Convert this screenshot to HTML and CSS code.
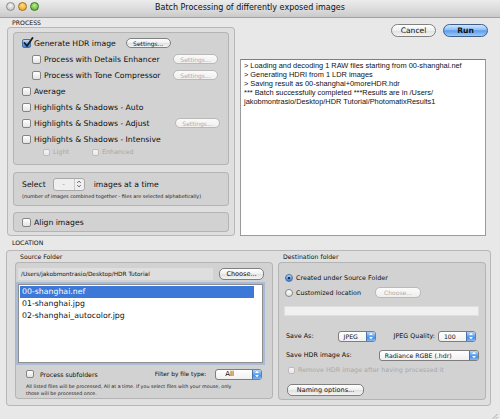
FILE: index.html
```html
<!DOCTYPE html>
<html>
<head>
<meta charset="utf-8">
<link rel="stylesheet" href="styles.css">
</head>
<body>
<div class="window">
  <div class="titlebar">
    <div class="lights">
      <span class="light close"></span>
      <span class="light min"></span>
      <span class="light zoom"></span>
    </div>
    <div class="title">Batch Processing of differently exposed images</div>
  </div>

  <div class="top">
    <div class="process-col">
      <div class="section-label">PROCESS</div>
      <div class="group outer process">
        <div class="group inner opts">
          <div class="row">
            <span class="cb checked"><svg viewBox="0 0 12 12" width="12" height="12"><path d="M2.5 6 L5 9 L10.5 1" fill="none" stroke="#1a1a1a" stroke-width="1.8" stroke-linecap="round" stroke-linejoin="round"/></svg></span>
            <span class="lbl">Generate HDR image</span>
            <span class="btn sm gen">Settings...</span>
          </div>
          <div class="row sub">
            <span class="cb"></span>
            <span class="lbl">Process with Details Enhancer</span>
            <span class="btn sm disabled push">Settings...</span>
          </div>
          <div class="row sub">
            <span class="cb"></span>
            <span class="lbl">Process with Tone Compressor</span>
            <span class="btn sm disabled push">Settings...</span>
          </div>
          <div class="row">
            <span class="cb"></span>
            <span class="lbl">Average</span>
          </div>
          <div class="row">
            <span class="cb"></span>
            <span class="lbl">Highlights &amp; Shadows - Auto</span>
          </div>
          <div class="row">
            <span class="cb"></span>
            <span class="lbl">Highlights &amp; Shadows - Adjust</span>
            <span class="btn sm disabled push adj">Settings...</span>
          </div>
          <div class="row">
            <span class="cb"></span>
            <span class="lbl">Highlights &amp; Shadows - Intensive</span>
          </div>
          <div class="row mini">
            <span class="cb tiny disabled"></span>
            <span class="lbl small dis light-lbl">Light</span>
            <span class="cb tiny disabled"></span>
            <span class="lbl small dis">Enhanced</span>
          </div>
        </div>
        <div class="group inner select">
          <div class="row sel">
            <span class="lbl">Select</span>
            <span class="stepper"><span class="stepfield">-</span><span class="steparrows"><svg viewBox="0 0 6 10" width="6" height="10"><path d="M1.2 4 L3 2 L4.8 4 M1.2 6 L3 8 L4.8 6" fill="none" stroke="#666" stroke-width="0.9"/></svg></span></span>
            <span class="lbl">images at a time</span>
          </div>
          <div class="tiny-note">(number of images combined together - files are selected alphabetically)</div>
        </div>
        <div class="group inner align">
          <div class="row">
            <span class="cb"></span>
            <span class="lbl">Align images</span>
          </div>
        </div>
      </div>
    </div>

    <div class="right-col">
      <div class="actions">
        <span class="btn big">Cancel</span>
        <span class="btn big default">Run</span>
      </div>
      <div class="log">
        <div>&gt; Loading and decoding 1 RAW files starting from 00-shanghai.nef</div>
        <div>&gt; Generating HDRI from 1 LDR images</div>
        <div>&gt; Saving result as 00-shanghai+0moreHDR.hdr</div>
        <div>*** Batch successfully completed ***Results are in /Users/</div>
        <div>jakobmontrasio/Desktop/HDR Tutorial/PhotomatixResults1</div>
      </div>
    </div>
  </div>

  <div class="section-label loc">LOCATION</div>
  <div class="group outer location">
    <div class="src-col">
      <div class="sublabel">Source Folder</div>
      <div class="group inner source">
        <div class="path-row">
          <span class="pathfield">/Users/jakobmontrasio/Desktop/HDR Tutorial</span>
          <span class="btn sm choose">Choose...</span>
        </div>
        <div class="list">
          <div class="item selected">00-shanghai.nef</div>
          <div class="item">01-shanghai.jpg</div>
          <div class="item">02-shanghai_autocolor.jpg</div>
        </div>
        <div class="filter-row">
          <span class="cb"></span>
          <span class="lbl small sub-lbl">Process subfolders</span>
          <span class="lbl small filter">Filter by file type:</span>
          <span class="popup all"><span class="ptext">All</span><span class="parrows"><svg viewBox="0 0 8 10" width="8" height="10"><path d="M2 4 L4 1.8 L6 4 Z M2 6 L4 8.2 L6 6 Z" fill="#fff"/></svg></span></span>
        </div>
        <div class="note">All listed files will be processed, All at a time. If you select files with your mouse, only<br>those will be processed once.</div>
      </div>
    </div>
    <div class="dst-col">
      <div class="sublabel">Destination folder</div>
      <div class="group inner dest">
        <div class="drow r1">
          <span class="radio on"></span>
          <span class="lbl small">Created under Source Folder</span>
        </div>
        <div class="drow r2">
          <span class="radio"></span>
          <span class="lbl small">Customized location</span>
          <span class="btn sm disabled choose2">Choose...</span>
        </div>
        <div class="destfield"></div>
        <div class="drow saveas">
          <span class="lbl small">Save As:</span>
          <span class="popup jpeg"><span class="ptext">JPEG</span><span class="parrows"><svg viewBox="0 0 8 10" width="8" height="10"><path d="M2 4 L4 1.8 L6 4 Z M2 6 L4 8.2 L6 6 Z" fill="#fff"/></svg></span></span>
          <span class="lbl small quality">JPEG Quality:</span>
          <span class="popup q"><span class="ptext">100</span><span class="parrows"><svg viewBox="0 0 8 10" width="8" height="10"><path d="M2 4 L4 1.8 L6 4 Z M2 6 L4 8.2 L6 6 Z" fill="#fff"/></svg></span></span>
        </div>
        <div class="drow savehdr">
          <span class="lbl small">Save HDR image As:</span>
          <span class="popup hdr"><span class="ptext">Radiance RGBE (.hdr)</span><span class="parrows"><svg viewBox="0 0 8 10" width="8" height="10"><path d="M2 4 L4 1.8 L6 4 Z M2 6 L4 8.2 L6 6 Z" fill="#fff"/></svg></span></span>
        </div>
        <div class="drow remove">
          <span class="cb disabled"></span>
          <span class="lbl small dis">Remove HDR image after having processed it</span>
        </div>
        <div class="drow naming">
          <span class="btn sm name">Naming options...</span>
        </div>
      </div>
    </div>
  </div>
  <div class="grip"><svg viewBox="0 0 10 10" width="10" height="10"><path d="M2 9.5 L9.5 2 M5 9.5 L9.5 5 M8 9.5 L9.5 8" stroke="#999" stroke-width="0.8"/></svg></div>
</div>
</body>
</html>
```

FILE: styles.css
```css
* { box-sizing: border-box; }
html, body { margin: 0; padding: 0; }
body {
  width: 500px;
  height: 419px;
  overflow: hidden;
  background: #e8e8e8;
  font-family: "DejaVu Sans", "Noto Sans", sans-serif;
  color: #111;
}
.window {
  position: relative;
  width: 500px;
  height: 419px;
  background: #e8e8e8;
}
.titlebar {
  position: relative;
  height: 18px;
  background: linear-gradient(#ececec, #d6d6d6 70%, #c9c9c9);
  border-bottom: 1px solid #a2a2a2;
  display: flex;
  align-items: center;
  justify-content: center;
}
.lights {
  position: absolute;
  left: 6px;
  top: 2px;
  display: flex;
  gap: 3px;
}
.light {
  width: 9px;
  height: 9px;
  border-radius: 50%;
  border: 1px solid #777;
}
.light.close { background: radial-gradient(circle at 50% 35%, #f4f4f4, #bcbcbc); border-color: #8a8a8a; }
.light.min { background: radial-gradient(circle at 50% 35%, #ffe27a, #e89b1c); border-color: #a86d10; }
.light.zoom { background: radial-gradient(circle at 50% 35%, #b9ef8a, #4ca62a); border-color: #3b7a1e; }
.title {
  font-size: 8px;
  color: #111;
  margin-top: -3px;
}

.top {
  display: flex;
  height: 218px;
}
.process-col {
  margin-left: 7px;
  width: 228px;
}
.section-label {
  font-size: 6.2px;
  line-height: 9px;
  height: 9px;
  padding-left: 5px;
  color: #111;
}
.group {
  border: 1px solid rgba(0,0,0,0.18);
  border-radius: 4px;
  background: rgba(0,0,0,0.035);
}
.group.inner {
  background: rgba(0,0,0,0.055);
  border-color: rgba(0,0,0,0.15);
}
.process {
  height: 209px;
  padding: 4px 5px 0 5px;
}
.opts {
  height: 133px;
  padding: 2px 8px 0 8px;
}
.row {
  display: flex;
  align-items: center;
  height: 16px;
}
.row.sub { padding-left: 10px; }
.row.mini { height: 10px; padding-left: 21px; }
.lbl {
  font-size: 7.7px;
  white-space: nowrap;
  color: #0e0e0e;
}
.lbl.small { font-size: 6.4px; }
.lbl.dis { color: #a8a8a8; }
.cb + .lbl { margin-left: 3px; }
.light-lbl { width: 39px; }
.cb {
  position: relative;
  flex: none;
  width: 9px;
  height: 9px;
  border: 1px solid #858585;
  border-radius: 2px;
  background: linear-gradient(#ffffff, #e3e3e3);
}
.cb.checked {
  background: linear-gradient(#c6defa, #6aa5ee 50%, #3c86e0);
  border-color: #4b6f9c;
}
.cb.checked svg {
  position: absolute;
  left: -1px;
  top: -3px;
}
.cb.tiny { width: 7px; height: 7px; }
.cb.disabled { border-color: #bdbdbd; background: linear-gradient(#f6f6f6, #e8e8e8); }

.btn {
  display: inline-flex;
  align-items: center;
  justify-content: center;
  flex: none;
  white-space: nowrap;
  border: 1px solid #808080;
  border-radius: 7px;
  background: linear-gradient(#ffffff, #efefef 50%, #e0e0e0 51%, #f4f4f4);
  color: #111;
}
.btn.sm {
  height: 10px;
  width: 45px;
  font-size: 6px;
  border-radius: 5px;
}
.btn.disabled { color: #ababab; border-color: #b9b9b9; background: linear-gradient(#fbfbfb, #efefef); }
.btn.gen { margin-left: 10px; }
.push { margin-left: auto; margin-right: 2px; }
.push.adj { margin-right: 0; }

.select {
  margin-top: 7px;
  height: 34px;
  padding: 4px 8px 0 8px;
}
.row.sel { height: 14px; }
.stepper {
  display: flex;
  align-items: center;
  margin-left: 7px;
  margin-right: 9px;
  width: 32px;
  height: 13px;
  border: 1px solid #a9a9a9;
  border-radius: 3px;
  background: #efefef;
}
.stepfield {
  flex: 1;
  font-size: 6.5px;
  text-align: center;
  color: #888;
  height: 100%;
  line-height: 11px;
  border-right: 1px solid #c8c8c8;
}
.steparrows {
  width: 9px;
  display: flex;
  justify-content: center;
}
.tiny-note {
  font-size: 4.9px;
  line-height: 7px;
  margin-top: 2px;
  white-space: nowrap;
  color: #222;
}
.align {
  margin-top: 6px;
  height: 20px;
  padding: 0 8px;
}
.align .row { height: 18px; }

.right-col {
  margin-left: 5px;
  width: 248px;
}
.actions {
  margin-top: 6px;
  display: flex;
  justify-content: flex-end;
  gap: 7px;
  height: 13px;
}
.btn.big {
  width: 45px;
  height: 13px;
  font-size: 7.6px;
  border-radius: 7px;
}
.btn.default {
  border-color: #3d5f8f;
  background: linear-gradient(#d3e6fc, #8fbef4 45%, #5b9ded 52%, #9ccbf8);
  font-weight: bold;
}
.log {
  margin-top: 22px;
  width: 246px;
  height: 177px;
  background: #fff;
  border: 1px solid #9b9b9b;
  border-top-color: #7e7e7e;
  padding: 1px 3px;
  font-family: "Liberation Sans", Arial, sans-serif;
  font-size: 7.4px;
  line-height: 9px;
  color: #111;
  white-space: nowrap;
}

.section-label.loc {
  margin-top: 2px;
  padding-left: 12px;
  height: 9px;
}
.location {
  margin-top: 3px;
  margin-left: 6px;
  width: 485px;
  height: 156px;
  display: flex;
  gap: 5px;
  padding: 0 4px 0 8px;
}
.sublabel {
  font-size: 6.2px;
  line-height: 11px;
  height: 11px;
  padding-left: 5px;
  color: #111;
}
.src-col { width: 258px; }
.dst-col { width: 208px; }
.source {
  height: 137px;
  padding: 5px 0 0 2px;
}
.path-row {
  display: flex;
  align-items: center;
  height: 12px;
}
.pathfield {
  width: 195px;
  height: 12px;
  background: #dedede;
  font-size: 5.8px;
  line-height: 12px;
  padding-left: 3px;
  white-space: nowrap;
  color: #111;
}
.btn.choose { margin-left: 6px; height: 12px; width: 45px; font-size: 6.5px; }
.list {
  margin-top: 4px;
  width: 245px;
  height: 79px;
  background: #fff;
  border: 1px solid #8e8e8e;
  box-shadow: 0 0 0 2px rgba(120,160,220,0.45);
  padding: 1px 0 0 1px;
}
.item {
  width: 234px;
  height: 12px;
  line-height: 12px;
  font-size: 7.8px;
  padding-left: 2px;
  color: #111;
}
.item.selected { background: #3b78d8; color: #fff; }
.filter-row {
  display: flex;
  align-items: center;
  margin-top: 5px;
  height: 12px;
  padding-left: 8px;
}
.filter-row .cb { width: 8px; height: 8px; }
.filter-row .lbl.sub-lbl { margin-left: 6px; font-size: 6.2px; }
.filter-row .lbl.filter { margin-left: 57px; font-size: 5.9px; }
.popup {
  display: inline-flex;
  align-items: stretch;
  flex: none;
  height: 11px;
  border: 1px solid #7d7d7d;
  border-radius: 3px;
  background: linear-gradient(#ffffff, #f0f0f0);
  overflow: hidden;
}
.ptext {
  flex: 1;
  font-size: 6.2px;
  line-height: 9px;
  padding-left: 5px;
  white-space: nowrap;
}
.parrows {
  width: 9px;
  display: flex;
  align-items: center;
  justify-content: center;
  background: linear-gradient(#b6d5fa, #5e9ff0 50%, #3b85e6 52%, #7fb8f6);
  border-left: 1px solid #4a73a8;
}
.popup.all { width: 47px; margin-left: 9px; }
.popup.all .ptext { font-size: 7px; padding-left: 9px; }
.note {
  margin-top: 3px;
  padding-left: 8px;
  font-size: 4.8px;
  line-height: 7px;
  white-space: nowrap;
  color: #222;
}

.dest {
  height: 138px;
  padding: 7px 0 0 5px;
}
.drow {
  display: flex;
  align-items: center;
}
.r1, .r2 { height: 15px; }
.radio {
  width: 8px;
  height: 8px;
  border-radius: 50%;
  border: 1px solid #878787;
  background: linear-gradient(#fff, #e1e1e1);
  margin-left: 1px;
  margin-right: 3px;
  flex: none;
  position: relative;
}
.radio.on {
  background: radial-gradient(circle, #1d2f4a 0 1.3px, transparent 1.6px), linear-gradient(#c7dffa, #5f9eec 55%, #3c85df);
  border-color: #4a6d9b;
}
.btn.choose2 { margin-left: 14px; height: 11px; width: 46px; font-size: 6px; }
.destfield {
  margin-top: 6px;
  width: 195px;
  height: 10px;
  background: #f0f0f0;
  border: 1px solid #dedede;
}
.saveas { margin-top: 14px; height: 12px; padding-left: 2px; }
.popup.jpeg { width: 38px; margin-left: 24px; }
.quality { margin-left: 18px; }
.popup.q { width: 38px; margin-left: 3px; }
.savehdr { margin-top: 7px; height: 12px; padding-left: 2px; }
.popup.hdr { width: 100px; margin-left: 27px; }
.remove { margin-top: 3px; height: 12px; padding-left: 4px; }
.remove .cb { width: 7px; height: 7px; }
.naming { margin-top: 8px; height: 12px; padding-left: 3px; }
.btn.name { width: 77px; height: 12px; font-size: 6.5px; }

.grip {
  position: absolute;
  right: 2px;
  bottom: 2px;
  width: 10px;
  height: 10px;
}
```
